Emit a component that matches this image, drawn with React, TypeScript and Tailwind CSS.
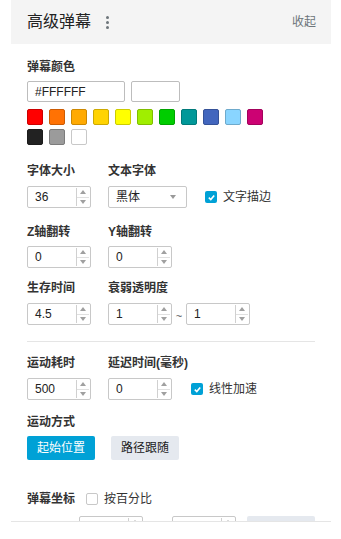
import React from "react";

function Spin() {
  return (
    <div className="w-[13px] border-l border-[#d0d0d0] flex flex-col my-[1px] mr-[1px]">
      <div className="flex-1 flex items-center justify-center border-b border-[#e0e0e0]">
        <div className="w-0 h-0 border-x-[3px] border-x-transparent border-b-[4px] border-b-[#a0a0a0]" />
      </div>
      <div className="flex-1 flex items-center justify-center">
        <div className="w-0 h-0 border-x-[3px] border-x-transparent border-t-[4px] border-t-[#a0a0a0]" />
      </div>
    </div>
  );
}

function Num({ v }: { v: string }) {
  return (
    <div className="flex h-[22px] w-[64px] border border-[#c8c8c8] rounded-[2px] bg-white shrink-0">
      <div className="flex-1 pl-[7px] flex items-center text-[12px] text-[#222]">{v}</div>
      <Spin />
    </div>
  );
}

function Check({ on, label }: { on: boolean; label: string }) {
  return (
    <div className="flex items-center gap-[6px]">
      {on ? (
        <div className="w-[12px] h-[12px] rounded-[2px] bg-[#00a1d6] flex items-center justify-center">
          <svg width="9" height="9" viewBox="0 0 10 10">
            <path d="M2 5.2 L4.2 7.2 L8 2.8" stroke="#fff" strokeWidth="1.8" fill="none" />
          </svg>
        </div>
      ) : (
        <div className="w-[12px] h-[12px] rounded-[2px] border border-[#c8c8c8] bg-white" />
      )}
      <span className="text-[12px] text-[#333] leading-[16px]">{label}</span>
    </div>
  );
}

function Label({ children, className = "" }: { children: React.ReactNode; className?: string }) {
  return <div className={"text-[12px] leading-[16px] font-bold text-[#333] " + className}>{children}</div>;
}

const swatches = [
  ["#ff0000", "#cc0000"],
  ["#ff7204", "#cc5b03"],
  ["#ffaa02", "#cc8802"],
  ["#ffd302", "#cca902"],
  ["#ffff00", "#cccc00"],
  ["#a0ee00", "#80be00"],
  ["#00cd00", "#00a400"],
  ["#019899", "#017a7a"],
  ["#4266be", "#355298"],
  ["#89d5ff", "#6eaacc"],
  ["#cc0273", "#a3025c"],
];
const swatches2 = [
  ["#222222", "#1b1b1b"],
  ["#9b9b9b", "#7c7c7c"],
  ["#ffffff", "#c8c8c8"],
];

export default function App() {
  return (
    <div className="w-[341px] h-[539px] bg-white overflow-hidden" style={{ fontFamily: "'Liberation Sans','Noto Sans CJK SC',sans-serif" }}>
      <div className="ml-[11px] w-[320px]">
        <div className="h-[44px] bg-[#f4f4f4] flex items-center justify-between pl-[16px] pr-[15px]">
          <div className="flex items-center">
            <span className="text-[16px] text-[#222] leading-[20px]">高级弹幕</span>
            <div className="ml-[15px] flex flex-col gap-[2px]">
              <div className="w-[3px] h-[3px] rounded-full bg-[#6d757a]" />
              <div className="w-[3px] h-[3px] rounded-full bg-[#6d757a]" />
              <div className="w-[3px] h-[3px] rounded-full bg-[#6d757a]" />
            </div>
          </div>
          <span className="text-[12px] text-[#6d757a]">收起</span>
        </div>
        <div className="h-[478px] border-b border-[#e5e5e5] overflow-hidden pl-[16px] pr-[16px] pt-[15px]">
          <Label>弹幕颜色</Label>
          <div className="mt-[6px] flex gap-[6px]">
            <div className="w-[98px] h-[21px] border border-[#bdbdbd] rounded-[2px] flex items-center pl-[7px] text-[12px] text-[#222]">#FFFFFF</div>
            <div className="w-[49px] h-[21px] border border-[#bdbdbd] rounded-[2px] bg-white" />
          </div>
          <div className="mt-[7px] flex gap-[6px]">
            {swatches.map(([c, b]) => (
              <div key={c} className="w-[16px] h-[16px] rounded-[2px] border" style={{ background: c, borderColor: b }} />
            ))}
          </div>
          <div className="mt-[4px] flex gap-[6px]">
            {swatches2.map(([c, b]) => (
              <div key={c} className="w-[16px] h-[16px] rounded-[2px] border" style={{ background: c, borderColor: b }} />
            ))}
          </div>

          <div className="mt-[18px] flex">
            <Label className="w-[81px]">字体大小</Label>
            <Label>文本字体</Label>
          </div>
          <div className="mt-[7px] flex items-center">
            <div className="w-[81px]"><Num v="36" /></div>
            <div className="w-[79px] h-[22px] border border-[#c8c8c8] rounded-[2px] flex items-center justify-between pl-[7px] pr-[10px]">
              <span className="text-[12px] text-[#222]">黑体</span>
              <div className="w-0 h-0 border-x-[3px] border-x-transparent border-t-[4px] border-t-[#999]" />
            </div>
            <div className="ml-[18px]"><Check on label="文字描边" /></div>
          </div>

          <div className="mt-[16px] flex">
            <Label className="w-[81px]">Z轴翻转</Label>
            <Label>Y轴翻转</Label>
          </div>
          <div className="mt-[6px] flex items-center">
            <div className="w-[81px]"><Num v="0" /></div>
            <Num v="0" />
          </div>

          <div className="mt-[12px] flex">
            <Label className="w-[81px]">生存时间</Label>
            <Label>衰弱透明度</Label>
          </div>
          <div className="mt-[7px] flex items-center">
            <div className="w-[81px]"><Num v="4.5" /></div>
            <Num v="1" />
            <span className="w-[14px] text-center text-[11px] text-[#555] mt-[4px]">~</span>
            <Num v="1" />
          </div>

          <div className="mt-[16px] h-px bg-[#e5e5e5]" />

          <div className="mt-[13px] flex">
            <Label className="w-[81px]">运动耗时</Label>
            <Label>延迟时间(毫秒)</Label>
          </div>
          <div className="mt-[7px] flex items-center">
            <div className="w-[81px]"><Num v="500" /></div>
            <Num v="0" />
            <div className="ml-[19px]"><Check on label="线性加速" /></div>
          </div>

          <Label className="mt-[14px]">运动方式</Label>
          <div className="mt-[6px] flex gap-[16px]">
            <div className="w-[68px] h-[24px] rounded-[2px] bg-[#00a1d6] text-white text-[12px] flex items-center justify-center">起始位置</div>
            <div className="w-[68px] h-[24px] rounded-[2px] bg-[#e5e9ef] text-[#222] text-[12px] flex items-center justify-center">路径跟随</div>
          </div>

          <div className="mt-[31px] flex items-center">
            <Label>弹幕坐标</Label>
            <div className="ml-[11px]"><Check on={false} label="按百分比" /></div>
          </div>
          <div className="mt-[9px] flex items-start">
            <div className="w-[52px]" />
            <div className="flex h-[22px] w-[64px] border border-[#c8c8c8] rounded-[2px] bg-white shrink-0">
              <div className="flex-1" />
              <Spin />
            </div>
            <div className="w-[29px]" />
            <div className="flex h-[22px] w-[64px] border border-[#c8c8c8] rounded-[2px] bg-white shrink-0">
              <div className="flex-1" />
              <Spin />
            </div>
            <div className="ml-[11px] w-[68px] h-[24px] rounded-[2px] bg-[#e5e9ef]" />
          </div>
        </div>
      </div>
    </div>
  );
}
